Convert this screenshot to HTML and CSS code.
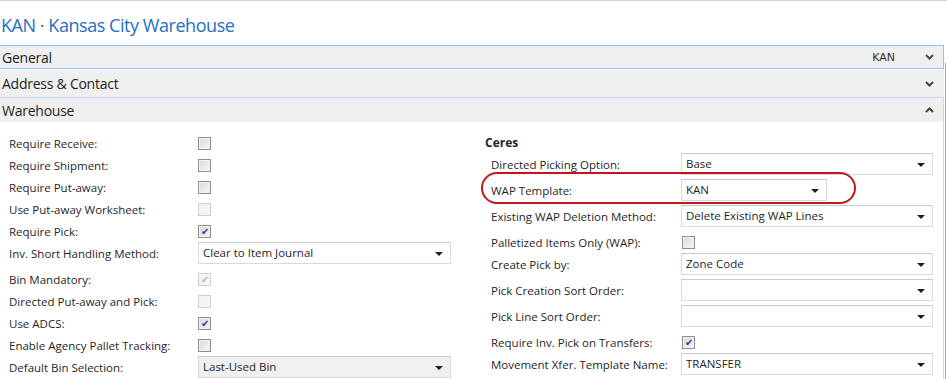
FILE: index.html
```html
<!DOCTYPE html>
<html lang="en">
<head>
    <meta charset="UTF-8">
    <title>KAN · Kansas City Warehouse</title>
    <link rel="stylesheet" href="styles.css">
</head>
<body>
<div class="page">
    <div class="main">
        <div class="title-bar">
            <h1>KAN · Kansas City Warehouse</h1>
        </div>

        <!-- fasttabs -->
        <div class="tab tab-focus">
            <span class="tab-name">General</span>
            <span class="tab-summary">KAN</span>
            <svg class="chev" width="9" height="6" viewBox="0 0 9 6"><polyline points="1,1 4.5,4.5 8,1" fill="none" stroke="#474747" stroke-width="2"/></svg>
        </div>
        <div class="tab tab-plain">
            <span class="tab-name">Address &amp; Contact</span>
            <svg class="chev" width="9" height="6" viewBox="0 0 9 6"><polyline points="1,1 4.5,4.5 8,1" fill="none" stroke="#474747" stroke-width="2"/></svg>
        </div>

        <div class="tab-open">
            <div class="tab tab-expanded">
                <span class="tab-name">Warehouse</span>
                <svg class="chev" width="9" height="6" viewBox="0 0 9 6"><polyline points="1,5 4.5,1.5 8,5" fill="none" stroke="#474747" stroke-width="2"/></svg>
            </div>

            <div class="fields">
                <div class="col col-left">
                    <div class="row"><label>Require Receive:</label><span class="check"></span></div>
                    <div class="row"><label>Require Shipment:</label><span class="check"></span></div>
                    <div class="row"><label>Require Put-away:</label><span class="check"></span></div>
                    <div class="row"><label>Use Put-away Worksheet:</label><span class="check off"></span></div>
                    <div class="row"><label>Require Pick:</label><span class="check on">&#10004;</span></div>
                    <div class="row row-select"><label>Inv. Short Handling Method:</label><span class="select">Clear to Item Journal<i class="arrow"></i></span></div>
                    <div class="row"><label>Bin Mandatory:</label><span class="check off on">&#10004;</span></div>
                    <div class="row"><label>Directed Put-away and Pick:</label><span class="check off"></span></div>
                    <div class="row"><label>Use ADCS:</label><span class="check on">&#10004;</span></div>
                    <div class="row"><label>Enable Agency Pallet Tracking:</label><span class="check"></span></div>
                    <div class="row row-select"><label>Default Bin Selection:</label><span class="select hover">Last-Used Bin<i class="arrow"></i></span></div>
                </div>

                <div class="col col-right">
                    <div class="group-title">Ceres</div>
                    <div class="row row-select"><label>Directed Picking Option:</label><span class="select">Base<i class="arrow"></i></span></div>
                    <div class="row row-select marked"><label>WAP Template:</label><span class="select short">KAN<i class="arrow"></i></span><div class="ring"></div></div>
                    <div class="row row-select"><label>Existing WAP Deletion Method:</label><span class="select">Delete Existing WAP Lines<i class="arrow"></i></span></div>
                    <div class="row"><label>Palletized Items Only (WAP):</label><span class="check"></span></div>
                    <div class="row row-select"><label>Create Pick by:</label><span class="select">Zone Code<i class="arrow"></i></span></div>
                    <div class="row row-select"><label>Pick Creation Sort Order:</label><span class="select"><i class="arrow"></i></span></div>
                    <div class="row row-select"><label>Pick Line Sort Order:</label><span class="select"><i class="arrow"></i></span></div>
                    <div class="row"><label>Require Inv. Pick on Transfers:</label><span class="check on">&#10004;</span></div>
                    <div class="row row-select"><label>Movement Xfer. Template Name:</label><span class="select">TRANSFER<i class="arrow"></i></span></div>
                </div>
            </div>
        </div>
    </div>
    <div class="edge"></div>
</div>
</body>
</html>
```

FILE: styles.css
```css
html, body {
    margin: 0;
    padding: 0;
    background: #fff;
    font-family: "Open Sans", "Noto Sans", sans-serif;
    color: #1f1f1f;
}
.page {
    display: flex;
    flex-direction: row;
    width: 947px;
    height: 379px;
    overflow: hidden;
    border-top: 1px solid #d4d4d4;
    box-sizing: border-box;
}
.main {
    width: 944px;
    flex: none;
}
.edge {
    width: 1px;
    margin-left: 1px;
    margin-top: 62px;
    background: #a8a8a8;
}
.title-bar {
    height: 44px;
    display: flex;
    align-items: center;
}
.title-bar h1 {
    margin: 3px 0 0 1px;
    font-size: 18px;
    font-weight: normal;
    color: #1f6fc5;
    letter-spacing: -0.45px;
}

/* fasttab headers */
.tab {
    display: flex;
    align-items: center;
    background: #efefef;
    font-size: 14px;
    color: #1e1e1e;
    padding-left: 2px;
    box-sizing: border-box;
    letter-spacing: -0.25px;
}
.tab-name {
    flex: 1;
}
.tab-summary {
    font-family: "DejaVu Sans", sans-serif;
    font-size: 11px;
    color: #333;
    margin-right: 30px;
    letter-spacing: 0;
}
.chev {
    margin-right: 9px;
}
.tab-focus {
    height: 24px;
    border: 1px solid #92c0f2;
    border-left: none;
}
.tab-plain {
    height: 27px;
    margin-top: 1px;
    padding-right: 1px;
}
.tab-open {
    border-top: 1px solid #c3dbf5;
    border-right: 1px solid #c3dbf5;
}
.tab-expanded {
    height: 24px;
}

/* field area */
.fields {
    display: grid;
    grid-template-columns: 485px 1fr;
    padding-top: 10px;
}
.col-left {
    padding-left: 9px;
}
.col-left label {
    width: 189px;
}
.col-right {
    padding-right: 9px;
}
.col-right .row {
    padding-left: 6px;
}
.col-right label {
    width: 190px;
}
.group-title {
    height: 21px;
    line-height: 21px;
    font-size: 12px;
    font-weight: bold;
}
.row {
    display: flex;
    align-items: center;
    height: 22px;
    font-size: 11.5px;
    position: relative;
}
.row-select {
    margin-bottom: 4px;
}
.row label {
    flex: none;
    white-space: nowrap;
}

/* checkboxes */
.check {
    width: 11px;
    height: 11px;
    border: 1px solid #8e8f8f;
    background: linear-gradient(135deg, #d9d9d9, #f7f7f7);
    box-shadow: inset 0 0 0 1px #f2f2f2;
    font-size: 10px;
    line-height: 11px;
    text-align: center;
    color: #23438f;
}
.col-right .check {
    margin-left: 1px;
}
.check.off {
    border-color: #cfcfcf;
    background: #f4f4f4;
    box-shadow: none;
    color: #b9b9b9;
}

/* dropdowns */
.select {
    position: relative;
    width: 253px;
    height: 22px;
    box-sizing: border-box;
    border: 1px solid #dadada;
    border-top-color: #c9c9c9;
    background: #fff;
    padding-left: 4px;
    line-height: 20px;
    white-space: nowrap;
}
.col-right .select {
    width: 252px;
}
.col-right .select.short {
    width: 146px;
}
.select.hover {
    background: #f0f0f0;
}
.arrow {
    position: absolute;
    right: 7px;
    top: 9px;
    width: 0;
    height: 0;
    border-left: 4px solid transparent;
    border-right: 4px solid transparent;
    border-top: 4px solid #1e1e1e;
}

/* red highlight drawn over the WAP Template row */
.ring {
    position: absolute;
    left: -4px;
    top: -7px;
    width: 371px;
    height: 28px;
    border: 2px solid #c2151f;
    border-radius: 16px;
    pointer-events: none;
}
```
